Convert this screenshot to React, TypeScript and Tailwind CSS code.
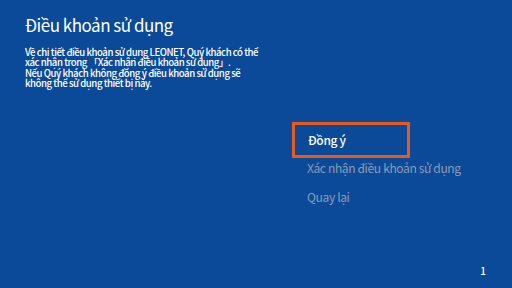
export default function App() {
  return (
    <div className="w-[512px] h-[288px] bg-[#0b4a99] text-white flex flex-col relative overflow-hidden" style={{ fontFamily: '"Noto Sans CJK JP", "Noto Sans", sans-serif' }}>
      <div className="pl-[25px] pt-[14px]">
        <h1 className="text-[17px] leading-[22px] tracking-[-0.5px]">Điều khoản sử dụng</h1>
        <p className="mt-[11px] text-[9.6px] leading-[10.4px] tracking-[-0.45px] font-medium">
          Về chi tiết điều khoản sử dụng LEONET, Quý khách có thể
          <br />
          xác nhận trong 「Xác nhận điều khoản sử dụng」.
          <br />
          Nếu Quý khách không đồng ý điều khoản sử dụng sẽ
          <br />
          không thể sử dụng thiết bị này.
        </p>
      </div>
      <div className="ml-[292px] mt-[33px] flex flex-col text-[12px] tracking-[-0.35px]">
        <div className="w-[118px] h-[36px] border-[3px] border-[#e85a1c] flex items-center pl-[13px] font-medium">Đồng ý</div>
        <div className="pl-[15px] h-[21px] flex items-center text-[#8c9db5]">Xác nhận điều khoản sử dụng</div>
        <div className="pl-[15px] mt-[6px] h-[24px] flex items-center text-[#8c9db5]">Quay lại</div>
      </div>
      <div className="absolute right-[26px] bottom-[10px] text-[10px] font-medium">1</div>
    </div>
  );
}
